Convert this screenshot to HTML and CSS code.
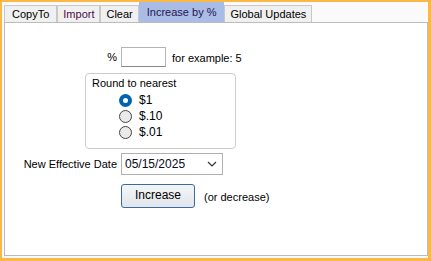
FILE: index.html
```html
<!DOCTYPE html>
<html lang="en">
<head>
  <meta charset="UTF-8">
  <title>Increase by %</title>
  <link rel="stylesheet" href="styles.css">
</head>
<body>
  <div class="frame">
    <div class="tabs">
      <span class="tab">CopyTo</span>
      <span class="tab tab-link">Import</span>
      <span class="tab">Clear</span>
      <span class="tab tab-active">Increase by %</span>
      <span class="tab">Global Updates</span>
    </div>
    <div class="panel">
      <div class="row">
        <span class="label">%</span>
        <input class="text-box" type="text">
        <span class="hint">for example: 5</span>
      </div>

      <div class="group">
        <div class="group-title">Round to nearest</div>
        <div class="radios">
          <div class="radio-row"><span class="radio checked"></span>$1</div>
          <div class="radio-row"><span class="radio"></span>$.10</div>
          <div class="radio-row"><span class="radio"></span>$.01</div>
        </div>
      </div>

      <div class="row row-date">
        <span class="label">New Effective Date</span>
        <div class="date-box">
          <span>05/15/2025</span>
          <svg width="10" height="6" viewBox="0 0 10 6"><path d="M1 1 L5 5 L9 1" fill="none" stroke="#333" stroke-width="1.2"/></svg>
        </div>
      </div>

      <div class="row row-button">
        <span class="label"></span>
        <button class="btn" type="button">Increase</button>
        <span class="hint">(or decrease)</span>
      </div>
    </div>
  </div>
</body>
</html>
```

FILE: styles.css
```css
* {
  margin: 0px;
  padding: 0px;
  box-sizing: border-box;
}

body {
  font-family: "Liberation Sans", Arial, sans-serif;
  font-size: 11px;
  color: #000;
}

.frame {
  width: 431px;
  height: 261px;
  border: 3px solid #fcb846;
  border-width: 2px 3px 3px 2px;
  background-color: #fafafa;
  padding: 0px 0px 0px 2px;
  display: flex;
  flex-direction: column;
}

.tabs {
  display: flex;
  align-items: flex-end;
  height: 20px;
}

.tab {
  height: 17px;
  line-height: 16px;
  padding: 0px 5px;
  border: 1px solid #c8c8c8;
  border-bottom: none;
  background-color: #f0f0f0;
}

.tab:first-child {
  padding: 0px 7px;
}

.tab-link {
  color: #4a0c4a;
}

.tab-active {
  height: 20px;
  line-height: 19px;
  padding: 0px 7px;
  background-color: #a9bce6;
  border-color: #a9bce6;
  color: #2a1450;
}

.panel {
  width: 424px;
  height: 234px;
  border: 1px solid #bcbcbc;
  background-color: #fff;
  padding-top: 24px;
}

.row {
  display: flex;
  align-items: center;
  height: 20px;
}

.label {
  width: 112px;
  text-align: right;
  margin-right: 4px;
}

.text-box {
  width: 45px;
  height: 20px;
  border: 1px solid #b4b4b4;
  border-bottom-color: #8a8a8a;
  margin-right: 6px;
}

.group {
  margin: 6px 0px 0px 80px;
  width: 151px;
  height: 76px;
  border: 1px solid #cccccc;
  border-radius: 4px;
  padding: 2px 0px 0px 6px;
}

.group-title {
  line-height: 14px;
}

.radios {
  margin: 2px 0px 0px 27px;
}

.radio-row {
  display: flex;
  align-items: center;
  height: 16px;
  font-size: 12px;
}

.radio {
  width: 13px;
  height: 13px;
  border-radius: 50%;
  border: 1px solid #444;
  background-color: #eaeaea;
  margin-right: 7px;
  position: relative;
}

.radio.checked {
  border: none;
  background-color: #0063b1;
}

.radio.checked::after {
  content: "";
  position: absolute;
  left: 4px;
  top: 4px;
  width: 5px;
  height: 5px;
  border-radius: 50%;
  background-color: #fff;
}

.row-date {
  margin-top: 4px;
  height: 22px;
}

.date-box {
  width: 102px;
  height: 22px;
  border: 1px solid #b0b0b0;
  display: flex;
  align-items: center;
  justify-content: space-between;
  padding: 0px 5px 0px 3px;
  font-size: 12px;
  color: #0a0a20;
}

.row-button {
  margin-top: 9px;
  height: 24px;
}

.btn {
  width: 74px;
  height: 24px;
  border: 1px solid #3c6a9e;
  border-radius: 3px;
  background: linear-gradient(#f3f5f8, #e1e6ec);
  font-family: "Liberation Sans", Arial, sans-serif;
  font-size: 12px;
  margin-right: 9px;
  padding-bottom: 2px;
}

.hint {
  padding-top: 2px;
}
```
